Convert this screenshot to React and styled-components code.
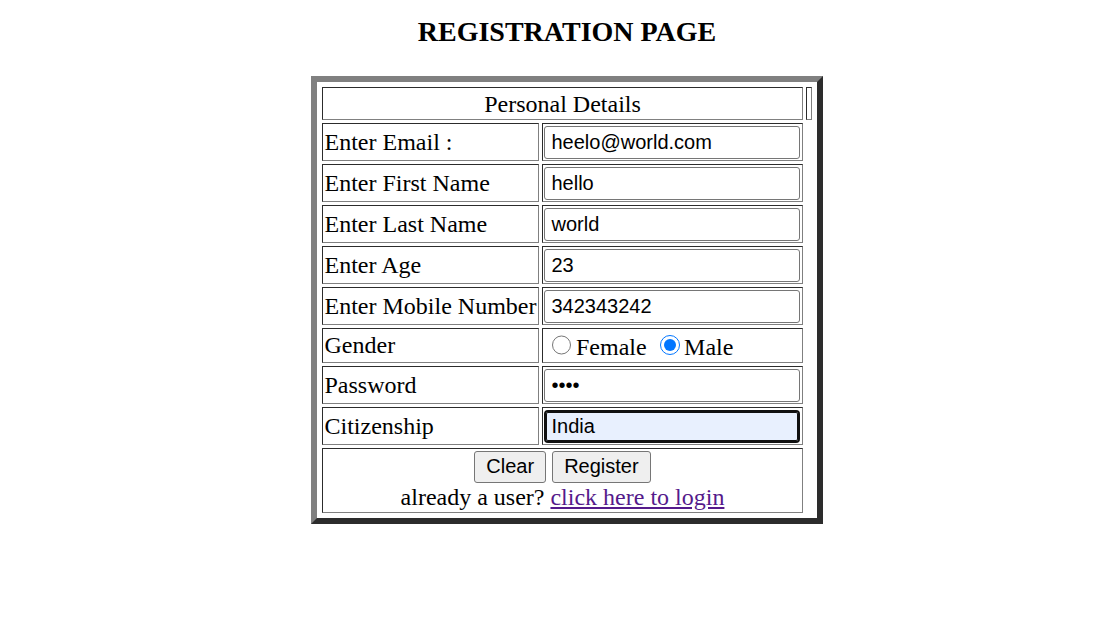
import React from "react"
import styled, { createGlobalStyle } from "styled-components"

const GlobalStyle = createGlobalStyle`
  body {
    margin: 0;
    background: #ffffff;
    color: #000000;
    font-family: "Liberation Serif", "Times New Roman", serif;
    font-size: 24px;
  }
`

const Page = styled.div`
  padding: 16px 0 0 17px;
  text-align: center;
`

const Title = styled.h3`
  margin: 0 0 28px;
  font-size: 28px;
  font-weight: bold;
  line-height: 32px;
`

const FormTable = styled.table`
  margin: 0 auto;
  border: 6px outset #808080;
  border-collapse: separate;
  border-spacing: 3px;
  padding: 2px;
  font-size: 24px;
  text-align: left;
`

const Cell = styled.td`
  border: 1px inset #808080;
  padding: 1.5px;
  line-height: ${(p) => (p.$tall ? "28px" : "normal")};
  vertical-align: middle;
  text-align: ${(p) => (p.$center ? "center" : "left")};
  white-space: nowrap;
`

const SpacerCell = styled.td`
  border: 1px inset #808080;
  padding: 1.5px;
  width: 1px;
`

const TextInput = styled.input`
  display: block;
  box-sizing: border-box;
  width: 256px;
  height: 33px;
  margin: 0;
  padding: 0 6px;
  border: 1px solid #767676;
  border-radius: 3px;
  background: #ffffff;
  color: #000000;
  font-family: "Liberation Sans", Arial, sans-serif;
  font-size: 20px;
  outline: none;
`

const FocusedInput = styled(TextInput)`
  padding: 0 5px;
  border: 2px solid #101010;
  border-radius: 4px;
  background: #e8f0fe;
  box-shadow: inset 0 0 0 1px #101010;
`

const Radio = styled.input`
  width: 19.5px;
  height: 19.5px;
  margin: 4.5px 4.5px 0 7.5px;
  accent-color: #0075ff;
`

const ButtonLine = styled.div`
  height: 32px;
  line-height: 32px;
`

const Button = styled.button`
  box-sizing: border-box;
  height: 32px;
  margin: 0;
  padding: 0 11px;
  border: 1px solid #767676;
  border-radius: 3px;
  background: #efefef;
  color: #000000;
  font-family: "Liberation Sans", Arial, sans-serif;
  font-size: 20px;
  vertical-align: top;
`

const LoginLink = styled.a`
  color: #551a8b;
  text-decoration: underline;
`

const fields = [
  { label: "Enter Email :", value: "heelo@world.com" },
  { label: "Enter First Name", value: "hello" },
  { label: "Enter Last Name", value: "world" },
  { label: "Enter Age", value: "23" },
  { label: "Enter Mobile Number", value: "342343242" },
]

const App = () => (
  <Page>
    <GlobalStyle />
    <Title>REGISTRATION PAGE</Title>
    <FormTable>
      <tbody>
        <tr>
          <Cell colSpan={2} $center $tall>Personal Details</Cell>
          <SpacerCell />
        </tr>
        {fields.map((f) => (
          <tr key={f.label}>
            <Cell>{f.label}</Cell>
            <Cell>
              <TextInput type="text" defaultValue={f.value} />
            </Cell>
          </tr>
        ))}
        <tr>
          <Cell>Gender</Cell>
          <Cell>
            <Radio type="radio" name="gender" />Female{" "}
            <Radio type="radio" name="gender" defaultChecked />Male
          </Cell>
        </tr>
        <tr>
          <Cell>Password</Cell>
          <Cell>
            <TextInput type="password" defaultValue="abcd" />
          </Cell>
        </tr>
        <tr>
          <Cell>Citizenship</Cell>
          <Cell>
            <FocusedInput type="text" defaultValue="India" />
          </Cell>
        </tr>
        <tr>
          <Cell colSpan={2} $center $tall>
            <ButtonLine>
              <Button type="button">Clear</Button>{" "}
              <Button type="button">Register</Button>
            </ButtonLine>
            already a user? <LoginLink href="#login">click here to login</LoginLink>
          </Cell>
        </tr>
      </tbody>
    </FormTable>
  </Page>
)

export default App
